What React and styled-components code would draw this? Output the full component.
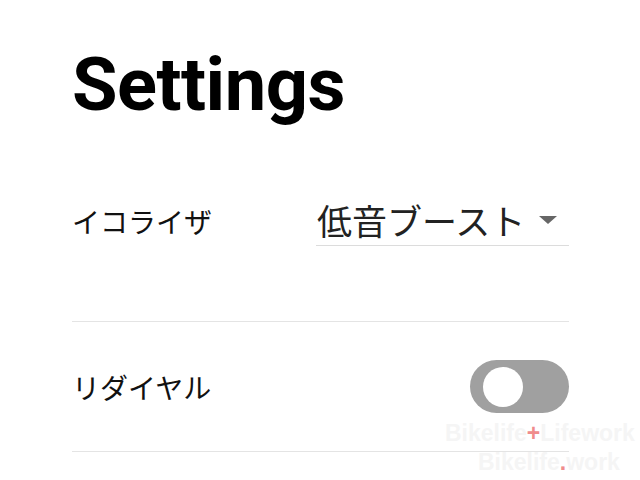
import React from 'react';
import styled, { createGlobalStyle } from 'styled-components';

const GlobalStyle = createGlobalStyle`
  html, body {
    margin: 0;
    padding: 0;
    background: #ffffff;
  }
  body {
    font-family: Roboto, 'Noto Sans CJK JP', sans-serif;
    color: #1a1a1a;
  }
`;

const App = () => {
  return (
    <Page>
      <GlobalStyle />
      <Title>Settings</Title>
      <Row $top={15} $bottom={75}>
        <Label>イコライザ</Label>
        <Select>
          <SelectValue>低音ブースト</SelectValue>
          <Caret />
        </Select>
      </Row>
      <Row $top={38} $bottom={38}>
        <Label>リダイヤル</Label>
        <Toggle aria-checked="false" role="switch">
          <Knob />
        </Toggle>
      </Row>
      <Watermark>
        <MarkLine>Bikelife<Accent>+</Accent>Lifework</MarkLine>
        <MarkLine $indent={33}>Bikelife<Accent>.</Accent>work</MarkLine>
      </Watermark>
    </Page>
  );
};

export default App;

const Page = styled.div`
  position: relative;
  width: 640px;
  height: 480px;
  overflow: hidden;
  box-sizing: border-box;
  padding: 48px 71px 0 72px;
`;

const Title = styled.h1`
  margin: 0 0 58px;
  font-family: Roboto, sans-serif;
  font-weight: 700;
  font-size: 74px;
  line-height: 74px;
  color: #000;
  letter-spacing: -0.5px;
`;

const Row = styled.div`
  display: flex;
  align-items: center;
  justify-content: space-between;
  padding: ${(p) => p.$top}px 0 ${(p) => p.$bottom}px;
  border-bottom: 1px solid #e4e4e4;
`;

const Label = styled.span`
  font-family: 'Noto Sans CJK JP', sans-serif;
  font-size: 28px;
  line-height: 36px;
  color: #111;
`;

const Select = styled.div`
  display: flex;
  align-items: center;
  width: 253px;
  height: 51px;
  box-sizing: border-box;
  padding-left: 1px;
  border-bottom: 1px solid #dcdcdc;
`;

const SelectValue = styled.span`
  flex: 1;
  font-family: 'Noto Sans CJK JP', sans-serif;
  font-size: 35px;
  line-height: 40px;
  color: #222;
`;

const Caret = styled.span`
  width: 0;
  height: 0;
  margin-right: 12px;
  border-left: 9px solid transparent;
  border-right: 9px solid transparent;
  border-top: 8px solid #666;
`;

const Toggle = styled.div`
  display: flex;
  align-items: center;
  width: 99px;
  height: 53px;
  box-sizing: border-box;
  padding-left: 13px;
  border-radius: 27px;
  background: #a0a0a0;
`;

const Knob = styled.div`
  width: 40px;
  height: 40px;
  border-radius: 50%;
  background: #fff;
`;

const Watermark = styled.div`
  position: absolute;
  left: 445px;
  top: 419px;
  font-family: 'Liberation Sans', sans-serif;
  font-weight: 700;
  font-size: 23px;
  line-height: 29px;
  color: #f5f5f5;
  pointer-events: none;
`;

const MarkLine = styled.div`
  padding-left: ${(p) => p.$indent || 0}px;
  white-space: nowrap;
`;

const Accent = styled.span`
  color: #f08c8c;
`;
